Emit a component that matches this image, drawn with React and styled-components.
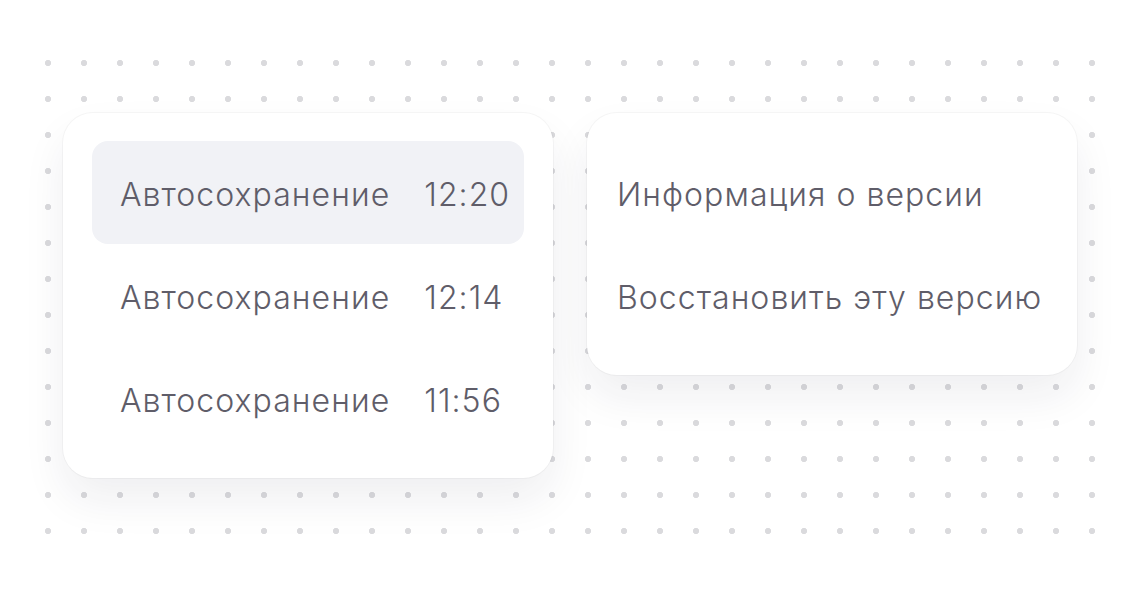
import React from 'react';
import styled, { createGlobalStyle } from 'styled-components';

const GlobalStyle = createGlobalStyle`
    html, body {
        margin: 0;
        padding: 0;
        background: #ffffff;
    }
    body {
        font-family: Inter, "Noto Sans", "Liberation Sans", sans-serif;
        -webkit-font-smoothing: antialiased;
    }
`;

const Page = styled.div`
    width: 1140px;
    height: 594px;
    padding-top: 45px;
    box-sizing: border-box;
`;

const Board = styled.div`
    width: 1080px;
    height: 504px;
    margin: 0 auto;
    box-sizing: border-box;
    padding: 68px 33px 0;
    display: flex;
    align-items: flex-start;
    gap: 34px;
    background-image: radial-gradient(circle at 18px 18px, #dadadd 0, #dadadd 2.8px, transparent 3.4px);
    background-size: 36px 36px;
`;

const Card = styled.div`
    width: 490px;
    box-sizing: border-box;
    padding: 28px ${p => p.$inset}px;
    background: #ffffff;
    border-radius: 30px;
    box-shadow: 0 0 0 1px rgba(20, 20, 40, 0.035), 0 22px 44px rgba(30, 30, 60, 0.07);
    display: flex;
    flex-direction: column;
`;

const Row = styled.div`
    height: 103px;
    box-sizing: border-box;
    display: flex;
    align-items: center;
    gap: 34px;
    padding: 4px ${p => p.$pad}px 0;
    border-radius: 16px;
    background: ${p => (p.$active ? '#f1f2f6' : 'transparent')};
    color: #5f5d69;
    font-size: 32px;
    font-weight: 350;
    letter-spacing: 1.05px;
    white-space: nowrap;
`;

const saves = [
    { label: 'Автосохранение', time: '12:20', active: true },
    { label: 'Автосохранение', time: '12:14' },
    { label: 'Автосохранение', time: '11:56' },
];

const actions = ['Информация о версии', 'Восстановить эту версию'];

export default function App() {
    return (
        <Page>
            <GlobalStyle />
            <Board>
                <Card $inset={29}>
                    {saves.map((s, i) => (
                        <Row key={i} $active={s.active} $pad={28}>
                            <span>{s.label}</span>
                            <span>{s.time}</span>
                        </Row>
                    ))}
                </Card>
                <Card $inset={30}>
                    {actions.map(a => (
                        <Row key={a} $pad={0}>
                            <span>{a}</span>
                        </Row>
                    ))}
                </Card>
            </Board>
        </Page>
    );
}
